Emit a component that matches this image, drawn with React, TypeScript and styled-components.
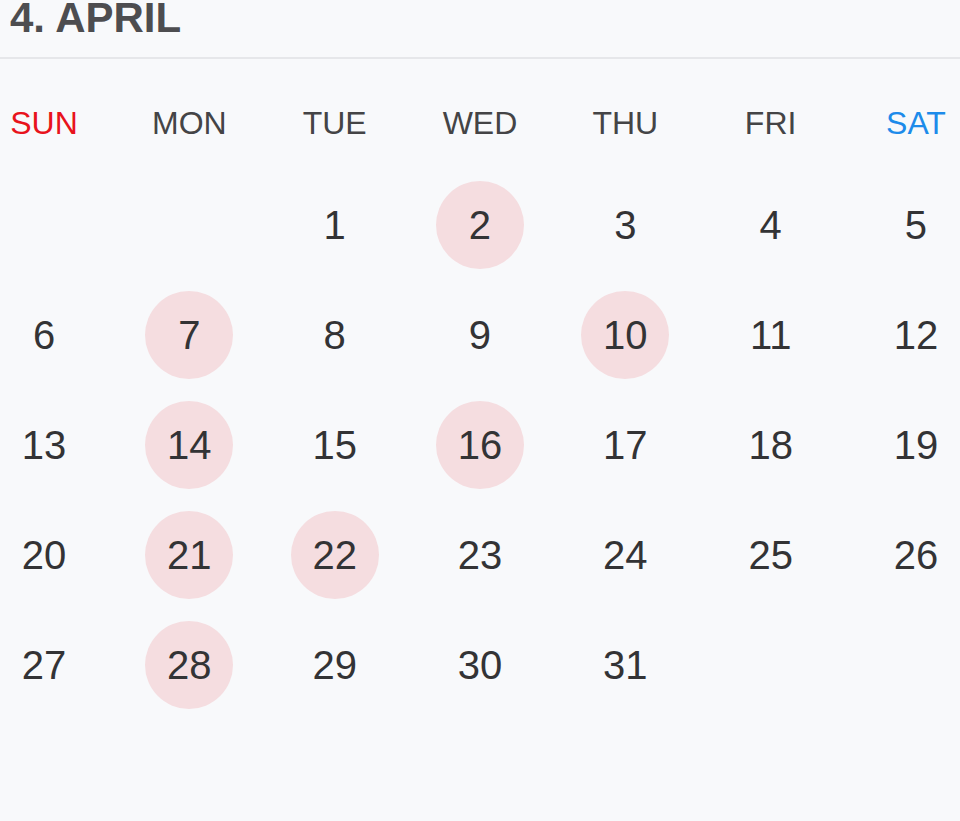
import styled, { createGlobalStyle } from 'styled-components';

const GlobalStyle = createGlobalStyle`
  html, body {
    margin: 0;
    padding: 0;
    background: #f8f9fb;
  }
  body {
    font-family: 'Liberation Sans', Arial, sans-serif;
  }
`;

const WEEK_DAYS = ['SUN', 'MON', 'TUE', 'WED', 'THU', 'FRI', 'SAT'];
const FIRST_WEEKDAY = 2;
const DAYS_IN_MONTH = 31;
const MARKED_DAYS = [2, 7, 10, 14, 16, 21, 22, 28];

const buildWeeks = () => {
  const cells: (number | null)[] = [];
  for (let i = 0; i < FIRST_WEEKDAY; i++) cells.push(null);
  for (let d = 1; d <= DAYS_IN_MONTH; d++) cells.push(d);
  while (cells.length % 7 !== 0) cells.push(null);
  const weeks: (number | null)[][] = [];
  for (let i = 0; i < cells.length; i += 7) weeks.push(cells.slice(i, i + 7));
  return weeks;
};

const App = () => {
  const weeks = buildWeeks();

  return (
    <>
      <GlobalStyle />
      <Page>
        <Title>4. APRIL</Title>
        <WeekHeader>
          {WEEK_DAYS.map((day, i) => (
            <DayName key={day} tone={i === 0 ? 'sun' : i === 6 ? 'sat' : 'normal'}>
              {day}
            </DayName>
          ))}
        </WeekHeader>
        <Weeks>
          {weeks.map((week, w) => (
            <WeekRow key={w}>
              {week.map((day, i) => (
                <DayCell key={i} marked={day !== null && MARKED_DAYS.includes(day)}>
                  {day ?? ''}
                </DayCell>
              ))}
            </WeekRow>
          ))}
        </Weeks>
      </Page>
    </>
  );
};

const Page = styled.div`
  min-height: 821px;
  background: #f8f9fb;
  display: flex;
  flex-direction: column;
`;

const Title = styled.h1`
  margin: 0;
  height: 57px;
  padding-left: 10px;
  font-size: 42px;
  line-height: 35px;
  font-weight: bold;
  color: #4d4d50;
  border-bottom: 2px solid #e6e7ea;
`;

const WeekHeader = styled.div`
  display: flex;
  justify-content: space-between;
  padding-top: 44px;
`;

const DayName = styled.span<{ tone: 'sun' | 'sat' | 'normal' }>`
  width: 88px;
  height: 40px;
  display: flex;
  align-items: center;
  justify-content: center;
  font-size: 32px;
  color: ${(props) =>
    props.tone === 'sun' ? '#e8131c' : props.tone === 'sat' ? '#1d8bea' : '#444446'};
`;

const Weeks = styled.div`
  display: flex;
  flex-direction: column;
  gap: 22px;
  margin-top: 38px;
`;

const WeekRow = styled.div`
  display: flex;
  justify-content: space-between;
`;

const DayCell = styled.span<{ marked: boolean }>`
  width: 88px;
  height: 88px;
  border-radius: 50%;
  display: flex;
  align-items: center;
  justify-content: center;
  font-size: 40px;
  color: #333335;
  background-color: ${(props) => (props.marked ? '#f5dde0' : 'transparent')};
`;

export default App;
